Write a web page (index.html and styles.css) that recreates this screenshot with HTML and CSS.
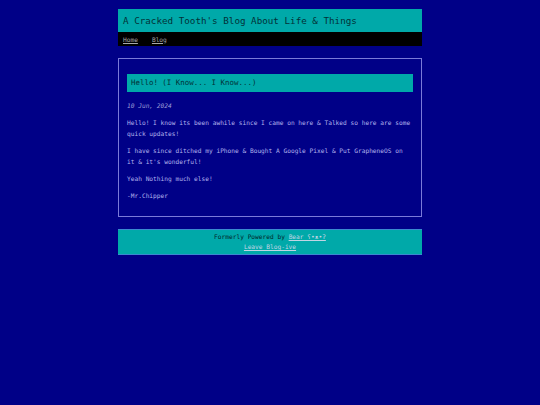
FILE: index.html
```html
<!DOCTYPE html>
<html lang="en">
<head>
<meta charset="utf-8">
<title>A Cracked Tooth's Blog</title>
<link rel="stylesheet" href="styles.css">
</head>
<body>
<div class="page">
  <header class="site-header">
    <h1 class="site-title">A Cracked Tooth's Blog About Life &amp; Things</h1>
    <nav class="site-nav">
      <a href="#">Home</a>
      <a href="#">Blog</a>
    </nav>
  </header>
  <main class="post">
    <h2 class="post-title">Hello! (I Know... I Know...)</h2>
    <p class="post-date"><i>10 Jun, 2024</i></p>
    <p>Hello! I know its been awhile since I came on here &amp; Talked so here are some quick updates!</p>
    <p>I have since ditched my iPhone &amp; Bought A Google Pixel &amp; Put GrapheneOS on it &amp; it's wonderful!</p>
    <p>Yeah Nothing much else!</p>
    <p>-Mr.Chipper</p>
  </main>
  <footer class="site-footer">
    <div>Formerly Powered by <a href="#">Bear ʕ•ᴥ•ʔ</a></div>
    <div><a href="#">Leave Blog-ive</a></div>
  </footer>
</div>
</body>
</html>
```
FILE: styles.css
```css
html, body {
  margin: 0;
  padding: 0;
}
body {
  background: #000087;
  font-family: "DejaVu Sans Mono", "Liberation Mono", monospace;
  color: #b2b2ec;
}
.page {
  width: 304px;
  margin: 9px auto 0;
}
.site-header {
  display: flex;
  flex-direction: column;
}
.site-title {
  margin: 0;
  background: #00a9a9;
  color: #033238;
  font-weight: normal;
  font-size: 9.25px;
  height: 23px;
  line-height: 23px;
  padding-left: 5px;
}
.site-nav {
  background: #000000;
  height: 14px;
  display: flex;
  align-items: center;
  gap: 14px;
  padding-left: 5px;
  font-size: 6.2px;
}
.site-nav a {
  color: #a8a8a8;
}
.post {
  display: block;
  margin-top: 12px;
  border: 1px solid #7a7ad8;
  padding: 15px 8px 15px;
  font-size: 6.2px;
  line-height: 11px;
}
.post-title {
  margin: 0 0 8px;
  background: #00a9a9;
  color: #033238;
  font-weight: normal;
  font-size: 7.45px;
  height: 18px;
  line-height: 18px;
  padding-left: 4px;
}
.post p {
  margin: 6px 0 0;
}
.post .post-date {
  margin-top: 0;
  color: #9c9cd8;
}
.site-footer {
  margin-top: 12px;
  background: #00a9a9;
  border: 1px solid #3a8ad0;
  border-left: none;
  border-right: none;
  color: #03262c;
  text-align: center;
  font-size: 6.2px;
  line-height: 10px;
  padding: 2px 0 2px;
}
.site-footer a {
  color: #c0d4e4;
}
```
